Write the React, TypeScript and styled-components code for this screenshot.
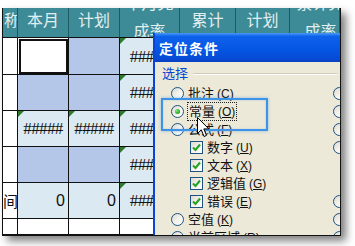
import React from "react";
import styled, { createGlobalStyle } from "styled-components";

const Global = createGlobalStyle`
  html, body { margin: 0; padding: 0; background: #ffffff; }
  body {
    width: 355px; height: 246px; overflow: hidden;
    font-family: "Noto Sans CJK SC", "Noto Sans", sans-serif;
  }
`;

const Page = styled.div`
  padding: 8px 0 0 2px;
`;

const Frame = styled.div`
  position: relative;
  width: 337px;
  height: 227px;
  border-left: 1px solid #111;
  border-right: 1px solid #111;
  border-bottom: 1px solid #111;
  overflow: hidden;
  background: #fff;
  box-shadow: 5px 5px 8px rgba(0, 0, 0, 0.5);
`;

const Sheet = styled.div`
  display: grid;
  grid-template-columns: 15px 51px 51px 60px 56px 54px 50px;
  grid-template-rows: 30px 37px 36px 36px 36px 36px 1fr;
  height: 100%;
`;

const HeadCell = styled.div<{ $end?: boolean }>`
  background: #3e8b98;
  border-right: 1px solid #1f5962;
  border-bottom: 1px solid #111;
  color: #e2efef;
  font-size: 16px;
  line-height: 20px;
  display: flex;
  align-items: center;
  justify-content: ${(p) => (p.$end ? "flex-end" : "center")};
  overflow: hidden;
  white-space: nowrap;
  padding-bottom: 7px;
  box-sizing: border-box;
  & > span { margin-right: ${(p) => (p.$end ? "-3px" : "0")}; }
`;

const HeadStack = styled.div<{ $pad?: number }>`
  background: #3e8b98;
  border-right: 1px solid #1f5962;
  border-bottom: 1px solid #111;
  color: #e2efef;
  font-size: 16px;
  line-height: 28px;
  display: flex;
  flex-direction: column;
  justify-content: flex-end;
  align-items: center;
  overflow: hidden;
  white-space: nowrap;
  padding-left: ${(p) => p.$pad ?? 0}px;
  box-sizing: border-box;
  & > span { display: block; margin-bottom: -7px; }
  & > span:first-child { margin-bottom: 0; }
`;

type Kind = "white" | "blue" | "lav" | "sel";

const bg: Record<Kind, string> = {
  white: "#ffffff",
  blue: "#dae9f2",
  lav: "#b5c7e8",
  sel: "#ffffff",
};

const Cell = styled.div<{ $kind: Kind; $tri?: boolean; $align?: string }>`
  position: relative;
  background: ${(p) => bg[p.$kind]};
  border-right: 1px solid #111;
  border-bottom: 1px solid #111;
  display: flex;
  align-items: center;
  justify-content: ${(p) => p.$align ?? "center"};
  padding: 0 3px;
  box-sizing: border-box;
  overflow: hidden;
  white-space: nowrap;
  font-family: "Liberation Sans", "Noto Sans CJK SC", sans-serif;
  font-size: 16px;
  color: #111;
  ${(p) => (p.$kind === "sel" ? "outline: 2px solid #111; outline-offset: -3px;" : "")}
  &::before {
    content: "";
    display: ${(p) => (p.$tri ? "block" : "none")};
    position: absolute;
    left: 0;
    top: 0;
    border-top: 6px solid #2d7a2a;
    border-right: 6px solid transparent;
  }
`;

const Hash = styled.span`
  font-family: "Liberation Serif", serif;
  font-size: 17px;
  letter-spacing: -0.6px;
  margin-top: 1px;
`;

const Clip = styled.span`
  font-family: "Noto Sans CJK SC", sans-serif;
  font-size: 15px;
  margin-right: -4px;
`;

/* ---------- dialog ---------- */

const Dialog = styled.div`
  position: absolute;
  left: 150px;
  top: 25px;
  width: 212px;
  height: 215px;
  background: #ece9d8;
  border-left: 2px solid #0a44d4;
  display: flex;
  flex-direction: column;
`;

const TitleBar = styled.div`
  height: 29px;
  flex: none;
  background: linear-gradient(
    180deg,
    #4a98f7 0%,
    #0d62ea 12%,
    #0556e4 55%,
    #064bd6 88%,
    #0a3fbf 100%
  );
  color: #ffffff;
  font-weight: 700;
  font-size: 14px;
  letter-spacing: 1px;
  display: flex;
  align-items: center;
  padding-left: 4px;
  padding-top: 1px;
  box-sizing: border-box;
`;

const Body = styled.div`
  padding: 3px 0 0 7px;
`;

const GroupHead = styled.div`
  display: flex;
  align-items: center;
  gap: 5px;
  width: 175px;
  height: 16px;
`;

const GroupLabel = styled.span`
  color: #0046d5;
  font-size: 13px;
  line-height: 16px;
`;

const GroupLine = styled.span`
  flex: 1;
  height: 1px;
  background: #cfcbbb;
  box-shadow: 0 1px 0 #ffffff;
`;

const Options = styled.div`
  margin-top: 3px;
  display: grid;
  grid-template-columns: 171px 30px;
  grid-auto-rows: 18px;
`;

const Opt = styled.div<{ $indent?: number }>`
  display: flex;
  align-items: center;
  gap: 4px;
  padding-left: ${(p) => p.$indent ?? 9}px;
  font-size: 13px;
  line-height: 15px;
  color: #111;
  white-space: nowrap;
`;

const Radio = styled.span<{ $on?: boolean }>`
  flex: none;
  width: 13px;
  height: 13px;
  box-sizing: border-box;
  border-radius: 50%;
  border: 1px solid #1d5281;
  background: linear-gradient(135deg, #dcd9cd 0%, #f5f4ee 55%, #ffffff 100%);
  display: flex;
  align-items: center;
  justify-content: center;
  &::after {
    content: "";
    display: ${(p) => (p.$on ? "block" : "none")};
    width: 5px;
    height: 5px;
    border-radius: 50%;
    background: radial-gradient(circle at 35% 35%, #8fe68a 0%, #2fb32a 55%, #1c8a1a 100%);
  }
`;

const Check = styled.span`
  flex: none;
  width: 13px;
  height: 13px;
  box-sizing: border-box;
  border: 1px solid #1d5281;
  background: linear-gradient(135deg, #dcd9cd 0%, #f5f4ee 55%, #ffffff 100%);
  display: flex;
  align-items: center;
  justify-content: center;
`;

const Focus = styled.span`
  outline: 1px dotted #222;
  outline-offset: 0px;
  padding: 0 1px;
`;

const U = styled.u`
  text-underline-offset: 1px;
`;

const Mark = styled.span`
  font-family: "Liberation Sans", sans-serif;
  font-size: 12px;
  margin-left: 3px;
`;

const Highlight = styled.div`
  position: absolute;
  left: 158px;
  top: 90px;
  width: 107px;
  height: 33px;
  box-sizing: border-box;
  border: 2px solid #3f93e6;
  box-shadow: 0 0 3px rgba(63, 147, 230, 0.55), inset 0 0 2px rgba(63, 147, 230, 0.4);
  pointer-events: none;
`;

const Cursor = styled.svg`
  position: absolute;
  left: 194px;
  top: 109px;
`;

const Tick = () => (
  <svg width="9" height="9" viewBox="0 0 9 9">
    <path d="M1 4.5 L3.5 7 L8 1.5" fill="none" stroke="#22a322" strokeWidth="2" />
  </svg>
);

const Key = ({ k }: { k: string }) => (
  <Mark>
    (<U>{k}</U>)
  </Mark>
);

type CellData = { kind: Kind; text?: string; tri?: boolean; align?: string; hash?: boolean; clip?: boolean };

const H = (extra: Partial<CellData> = {}): CellData => ({ kind: "blue", text: "#####", tri: true, hash: true, ...extra });
const B: CellData = { kind: "blue" };
const W: CellData = { kind: "white" };
const L: CellData = { kind: "lav" };

const rows: CellData[][] = [
  [W, { kind: "sel" }, L, H(), B, B, B],
  [W, L, L, H(), B, B, B],
  [W, H(), H(), H(), B, B, B],
  [W, L, L, H(), B, B, B],
  [
    { kind: "white", text: "期间", align: "flex-end", clip: true },
    { kind: "blue", text: "0", align: "flex-end" },
    { kind: "blue", text: "0", align: "flex-end" },
    H(),
    B,
    B,
    B,
  ],
  [W, W, W, W, W, W, W],
];

const rightRadios = [true, true, true, true, false, false, true, true, true];

export default function App() {
  const left: React.ReactNode[] = [
    <Opt key="a">
      <Radio />
      <span>
        批注<Key k="C" />
      </span>
    </Opt>,
    <Opt key="b">
      <Radio $on />
      <Focus>
        常量<Key k="O" />
      </Focus>
    </Opt>,
    <Opt key="c">
      <Radio />
      <span>
        公式<Key k="F" />
      </span>
    </Opt>,
    <Opt key="d" $indent={28}>
      <Check>
        <Tick />
      </Check>
      <span>
        数字<Key k="U" />
      </span>
    </Opt>,
    <Opt key="e" $indent={28}>
      <Check>
        <Tick />
      </Check>
      <span>
        文本<Key k="X" />
      </span>
    </Opt>,
    <Opt key="f" $indent={28}>
      <Check>
        <Tick />
      </Check>
      <span>
        逻辑值<Key k="G" />
      </span>
    </Opt>,
    <Opt key="g" $indent={28}>
      <Check>
        <Tick />
      </Check>
      <span>
        错误<Key k="E" />
      </span>
    </Opt>,
    <Opt key="h">
      <Radio />
      <span>
        空值<Key k="K" />
      </span>
    </Opt>,
    <Opt key="i">
      <Radio />
      <span>
        当前区域<Key k="R" />
      </span>
    </Opt>,
  ];

  return (
    <>
      <Global />
      <Page>
        <Frame>
          <Sheet>
            <HeadCell $end>
              <span>名称</span>
            </HeadCell>
            <HeadCell>本月</HeadCell>
            <HeadCell>计划</HeadCell>
            <HeadStack>
              <span>本月完</span>
              <span>成率</span>
            </HeadStack>
            <HeadCell>累计</HeadCell>
            <HeadCell>计划</HeadCell>
            <HeadStack $pad={12}>
              <span>累计完</span>
              <span>成率</span>
            </HeadStack>
            {rows.map((r, ri) =>
              r.map((c, ci) => (
                <Cell key={`${ri}-${ci}`} $kind={c.kind} $tri={c.tri} $align={c.align}>
                  {c.hash ? <Hash>{c.text}</Hash> : c.clip ? <Clip>{c.text}</Clip> : c.text}
                </Cell>
              ))
            )}
          </Sheet>

          <Dialog>
            <TitleBar>定位条件</TitleBar>
            <Body>
              <GroupHead>
                <GroupLabel>选择</GroupLabel>
                <GroupLine />
              </GroupHead>
              <Options>
                {left.map((node, i) => (
                  <React.Fragment key={i}>
                    {node}
                    <Opt $indent={0}>{rightRadios[i] ? <Radio /> : null}</Opt>
                  </React.Fragment>
                ))}
              </Options>
            </Body>
          </Dialog>

          <Highlight />
          <Cursor width="13" height="21" viewBox="0 0 13 21">
            <path
              d="M0.5 0.5 L0.5 16.5 L4.3 12.8 L7 19.5 L9.5 18.4 L6.8 11.9 L11.8 11.9 Z"
              fill="#ffffff"
              stroke="#000000"
              strokeWidth="1"
              strokeLinejoin="miter"
            />
          </Cursor>
        </Frame>
      </Page>
    </>
  );
}
